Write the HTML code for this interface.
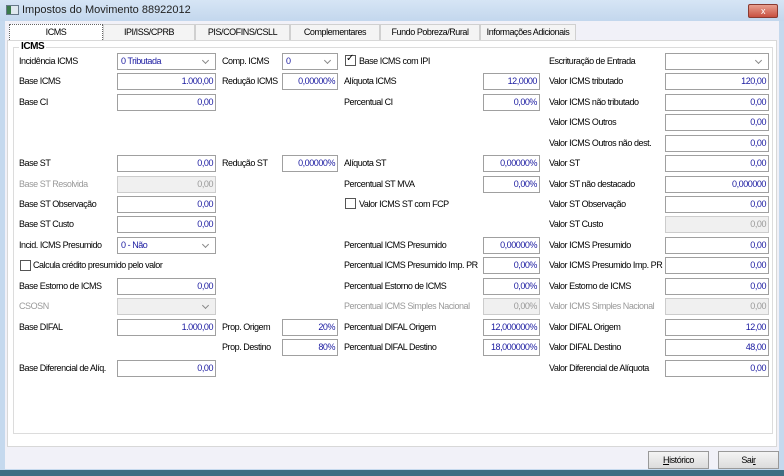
<!DOCTYPE html>
<html><head><meta charset="utf-8"><style>
*{margin:0;padding:0;box-sizing:border-box}
body{width:784px;height:476px;overflow:hidden;background:#c5d9ee;font-family:"Liberation Sans",sans-serif;font-size:9px;letter-spacing:-0.45px;color:#000;position:relative}
.a{position:absolute;white-space:nowrap}
.l{position:absolute;white-space:nowrap;line-height:12px}
.i{position:absolute;height:17px;border:1px solid #a0a0a0;background:#fff;color:#1a1aa0;text-align:right;padding-right:2px;line-height:15px}
.d{background:#f0f0f0;color:#999;border-color:#ccc}
.s{text-align:left;padding-left:3px}
.s:after{content:"";position:absolute;right:7px;top:4px;width:4px;height:4px;border-right:1px solid #888;border-bottom:1px solid #888;transform:rotate(45deg)}
.g{color:#999}
.cb{position:absolute;width:11px;height:11px;border:1px solid #555;background:#fff}
.tab{position:absolute;top:24px;height:16px;line-height:15px;text-align:center;border:1px solid #d0d0d0;border-bottom:none;background:#f4f4f4}
.btn{position:absolute;top:451px;width:61px;height:18px;border:1px solid #999;background:linear-gradient(#f4f4f4,#dcdcdc);text-align:center;line-height:16px}
</style></head><body>
<div class="a" style="left:0;top:0;width:784px;height:21px;background:linear-gradient(#d6e5f5,#c3d7ed)"></div>
<div class="a" style="left:6px;top:5px;width:13px;height:10px;background:#dfe8ef;border:1px solid #678"><div style="width:4px;height:8px;background:#3a7a4a"></div></div>
<div class="a" style="left:22px;top:4px;font-size:11px;letter-spacing:0;color:#222">Impostos do Movimento 88922012</div>
<div class="a" style="left:748px;top:4px;width:30px;height:14px;background:linear-gradient(#e8a090,#c85040);border:1px solid #8a3a30;border-radius:2px;color:#fff;text-align:center;line-height:12px;font-size:9px">x</div>
<div class="a" style="left:5px;top:21px;width:774px;height:448px;background:#f1f1f8"></div>
<div class="tab" style="left:9px;width:94px;background:#fff;border:1px dotted #666;border-bottom:none">ICMS</div>
<div class="tab" style="left:103px;width:92px">IPI/ISS/CPRB</div>
<div class="tab" style="left:195px;width:95px">PIS/COFINS/CSLL</div>
<div class="tab" style="left:290px;width:90px">Complementares</div>
<div class="tab" style="left:380px;width:100px">Fundo Pobreza/Rural</div>
<div class="tab" style="left:480px;width:96px">Informações Adicionais</div>
<div class="a" style="left:7px;top:40px;width:770px;height:407px;background:#fff;border:1px solid #d8d8d8"></div>
<div class="a" style="left:13px;top:47px;width:760px;height:387px;border:1px solid #dcdcdc"></div>
<div class="a" style="left:19px;top:41px;background:#fff;padding:0 2px;font-weight:bold;font-size:10px">ICMS</div>

<div class="l" style="left:19px;top:55px">Incidência ICMS</div><div class="i s" style="left:117px;top:53px;width:99px">0 Tributada</div>
<div class="l" style="left:222px;top:55px">Comp. ICMS</div><div class="i s" style="left:282px;top:53px;width:56px">0</div>
<div class="cb" style="left:345px;top:55px"></div><div class="a" style="left:346px;top:53px;font-size:10px">✓</div><div class="l" style="left:359px;top:55px">Base ICMS com IPI</div>
<div class="l" style="left:549px;top:55px">Escrituração de Entrada</div><div class="i s" style="left:665px;top:53px;width:104px"></div>

<div class="l" style="left:19px;top:75px">Base ICMS</div><div class="i" style="left:117px;top:73px;width:99px">1.000,00</div>
<div class="l" style="left:222px;top:75px">Redução ICMS</div><div class="i" style="left:282px;top:73px;width:56px">0,00000%</div>
<div class="l" style="left:344px;top:75px">Alíquota ICMS</div><div class="i" style="left:483px;top:73px;width:57px">12,0000</div>
<div class="l" style="left:549px;top:75px">Valor ICMS tributado</div><div class="i" style="left:665px;top:73px;width:104px">120,00</div>

<div class="l" style="left:19px;top:96px">Base CI</div><div class="i" style="left:117px;top:94px;width:99px">0,00</div>
<div class="l" style="left:344px;top:96px">Percentual CI</div><div class="i" style="left:483px;top:94px;width:57px">0,00%</div>
<div class="l" style="left:549px;top:96px">Valor ICMS não tributado</div><div class="i" style="left:665px;top:94px;width:104px">0,00</div>

<div class="l" style="left:549px;top:116px">Valor ICMS Outros</div><div class="i" style="left:665px;top:114px;width:104px">0,00</div>
<div class="l" style="left:549px;top:137px">Valor ICMS Outros não dest.</div><div class="i" style="left:665px;top:135px;width:104px">0,00</div>

<div class="l" style="left:19px;top:157px">Base ST</div><div class="i" style="left:117px;top:155px;width:99px">0,00</div>
<div class="l" style="left:222px;top:157px">Redução ST</div><div class="i" style="left:282px;top:155px;width:56px">0,00000%</div>
<div class="l" style="left:344px;top:157px">Alíquota ST</div><div class="i" style="left:483px;top:155px;width:57px">0,00000%</div>
<div class="l" style="left:549px;top:157px">Valor ST</div><div class="i" style="left:665px;top:155px;width:104px">0,00</div>

<div class="l g" style="left:19px;top:178px">Base ST Resolvida</div><div class="i d" style="left:117px;top:176px;width:99px">0,00</div>
<div class="l" style="left:344px;top:178px">Percentual ST MVA</div><div class="i" style="left:483px;top:176px;width:57px">0,00%</div>
<div class="l" style="left:549px;top:178px">Valor ST não destacado</div><div class="i" style="left:665px;top:176px;width:104px">0,000000</div>

<div class="l" style="left:19px;top:198px">Base ST Observação</div><div class="i" style="left:117px;top:196px;width:99px">0,00</div>
<div class="cb" style="left:345px;top:198px"></div><div class="l" style="left:359px;top:198px">Valor ICMS ST com FCP</div>
<div class="l" style="left:549px;top:198px">Valor ST Observação</div><div class="i" style="left:665px;top:196px;width:104px">0,00</div>

<div class="l" style="left:19px;top:218px">Base ST Custo</div><div class="i" style="left:117px;top:216px;width:99px">0,00</div>
<div class="l" style="left:549px;top:218px">Valor ST Custo</div><div class="i d" style="left:665px;top:216px;width:104px">0,00</div>

<div class="l" style="left:19px;top:239px">Incid. ICMS Presumido</div><div class="i s" style="left:117px;top:237px;width:99px">0 - Não</div>
<div class="l" style="left:344px;top:239px">Percentual ICMS Presumido</div><div class="i" style="left:483px;top:237px;width:57px">0,00000%</div>
<div class="l" style="left:549px;top:239px">Valor ICMS Presumido</div><div class="i" style="left:665px;top:237px;width:104px">0,00</div>

<div class="cb" style="left:20px;top:260px"></div><div class="l" style="left:33px;top:259px">Calcula crédito presumido pelo valor</div>
<div class="l" style="left:344px;top:259px">Percentual ICMS Presumido Imp. PR</div><div class="i" style="left:483px;top:257px;width:57px">0,00%</div>
<div class="l" style="left:549px;top:259px">Valor ICMS Presumido Imp. PR</div><div class="i" style="left:665px;top:257px;width:104px">0,00</div>

<div class="l" style="left:19px;top:280px">Base Estorno de ICMS</div><div class="i" style="left:117px;top:278px;width:99px">0,00</div>
<div class="l" style="left:344px;top:280px">Percentual Estorno de ICMS</div><div class="i" style="left:483px;top:278px;width:57px">0,00%</div>
<div class="l" style="left:549px;top:280px">Valor Estorno de ICMS</div><div class="i" style="left:665px;top:278px;width:104px">0,00</div>

<div class="l g" style="left:19px;top:300px">CSOSN</div><div class="i d s" style="left:117px;top:298px;width:99px"></div>
<div class="l g" style="left:344px;top:300px">Percentual ICMS Simples Nacional</div><div class="i d" style="left:483px;top:298px;width:57px">0,00%</div>
<div class="l g" style="left:549px;top:300px">Valor ICMS Simples Nacional</div><div class="i d" style="left:665px;top:298px;width:104px">0,00</div>

<div class="l" style="left:19px;top:321px">Base DIFAL</div><div class="i" style="left:117px;top:319px;width:99px">1.000,00</div>
<div class="l" style="left:222px;top:321px">Prop. Origem</div><div class="i" style="left:282px;top:319px;width:56px">20%</div>
<div class="l" style="left:344px;top:321px">Percentual DIFAL Origem</div><div class="i" style="left:483px;top:319px;width:57px">12,000000%</div>
<div class="l" style="left:549px;top:321px">Valor DIFAL Origem</div><div class="i" style="left:665px;top:319px;width:104px">12,00</div>

<div class="l" style="left:222px;top:341px">Prop. Destino</div><div class="i" style="left:282px;top:339px;width:56px">80%</div>
<div class="l" style="left:344px;top:341px">Percentual DIFAL Destino</div><div class="i" style="left:483px;top:339px;width:57px">18,000000%</div>
<div class="l" style="left:549px;top:341px">Valor DIFAL Destino</div><div class="i" style="left:665px;top:339px;width:104px">48,00</div>

<div class="l" style="left:19px;top:362px">Base Diferencial de Alíq.</div><div class="i" style="left:117px;top:360px;width:99px">0,00</div>
<div class="l" style="left:549px;top:362px">Valor Diferencial de Alíquota</div><div class="i" style="left:665px;top:360px;width:104px">0,00</div>

<div class="btn" style="left:648px"><u>H</u>istórico</div>
<div class="btn" style="left:718px">Sai<u>r</u></div>
<div class="a" style="left:0;top:470px;width:784px;height:6px;background:#3d6e82"></div>
</body></html>
